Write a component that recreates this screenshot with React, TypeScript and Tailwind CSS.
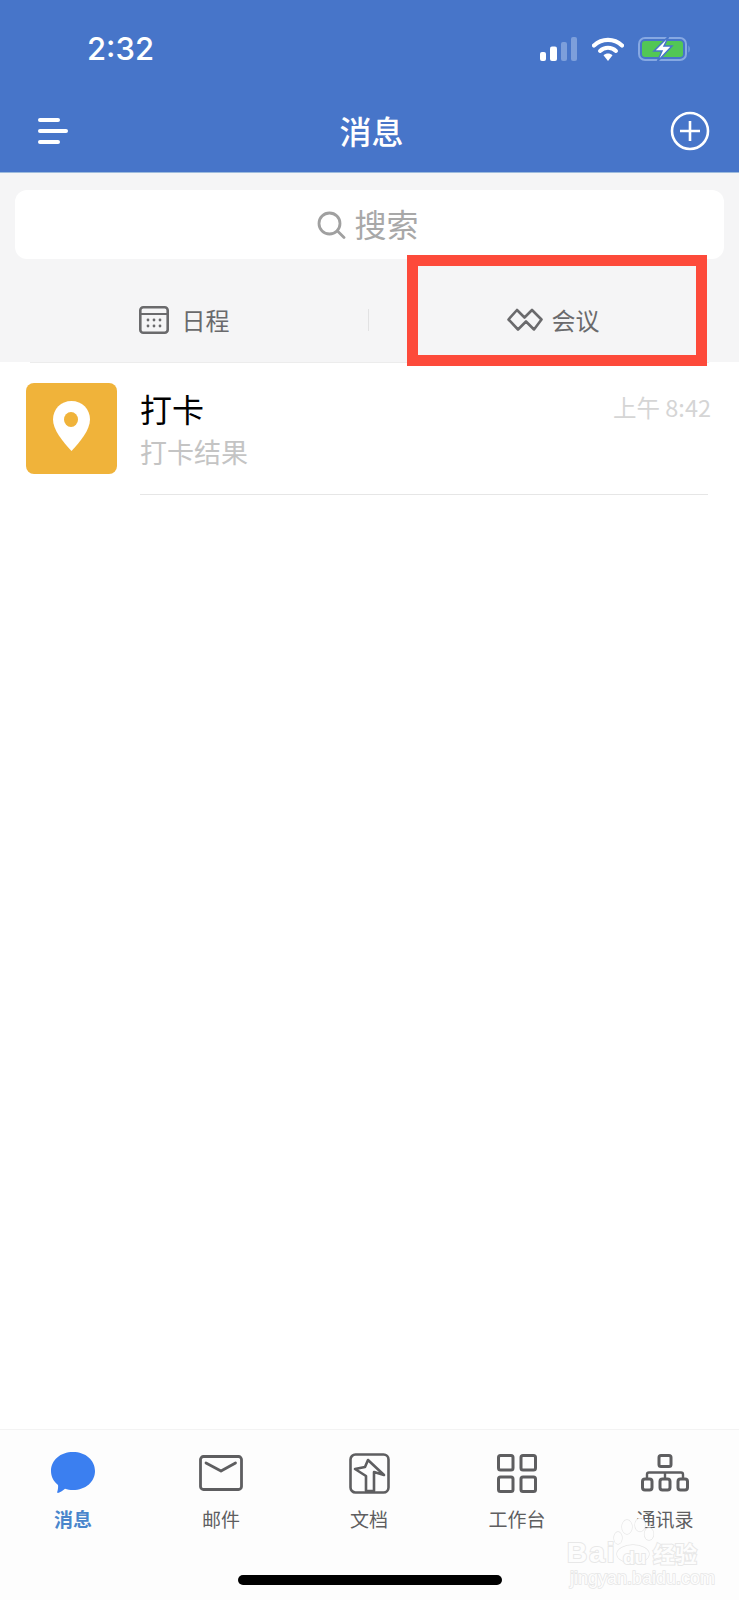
const font = "font-['Noto_Sans_CJK_SC','Noto_Sans',sans-serif]";

function TabItem({ label, active, children }: { label: string; active?: boolean; children: React.ReactNode }) {
  return (
    <div className="flex-1 flex flex-col items-center">
      <div className="h-[50px] flex items-center justify-center">{children}</div>
      <span className={`mt-[9px] text-[19px] leading-[24px] ${active ? "text-[#4a86cc] font-bold" : "text-[#5e5e60]"}`}>{label}</span>
    </div>
  );
}

export default function App() {
  return (
    <div className={`${font} relative w-[739px] h-[1600px] overflow-hidden bg-white flex flex-col`}>
      {/* blue header */}
      <header className="h-[173px] shrink-0 bg-[#4775c9] border-b border-[#9dbbdd] text-white">
        <div className="h-[102px] flex items-start pt-[31px] pl-[87px] pr-[48px]">
          <span className="font-['Inter',sans-serif] text-[31px] leading-[36px] font-medium">2:32</span>
          <div className="ml-auto flex items-center gap-[14px] h-[36px]">
            <svg width="38" height="24" viewBox="0 0 38 24">
              <rect x="0" y="15" width="6" height="9" rx="2" fill="#fff" />
              <rect x="10" y="9.500" width="7" height="14.500" rx="2" fill="#fff" />
              <rect x="21" y="5" width="6" height="19" rx="2" fill="#7d9fdb" />
              <rect x="31" y="0" width="6" height="24" rx="2" fill="#7d9fdb" />
            </svg>
            <svg width="32" height="24" viewBox="0 0 32 24" fill="none">
              <path d="M2 8.500C10 1 22 1 30 8.500" stroke="#fff" strokeWidth="4.200" strokeLinecap="round" />
              <path d="M8 14C12.500 9.800 19.500 9.800 24 14" stroke="#fff" strokeWidth="4" strokeLinecap="round" />
              <path d="M11.500 18.300C14 16 18 16 20.500 18.300L16 24Z" fill="#fff" />
            </svg>
            <svg width="53" height="26" viewBox="0 0 53 26" fill="none">
              <rect x="1" y="2" width="47" height="22" rx="6" stroke="#86a8e2" strokeWidth="2" />
              <rect x="4" y="5" width="41" height="16" rx="3" fill="#52c755" />
              <path d="M50.500 9.500C52 10.500 52 15.500 50.500 16.500Z" fill="#86a8e2" />
              <path d="M31 0L16 15H24L19 26L34 10H26Z" fill="#fff" stroke="#4775c9" strokeWidth="1.500" />
            </svg>
          </div>
        </div>
        <div className="h-[69px] flex items-center pl-[38px] pr-[29px] -mt-[6px]">
          <svg width="31" height="26" viewBox="0 0 31 26">
            <rect x="0" y="0" width="22" height="4" rx="2" fill="#fff" />
            <rect x="0" y="11" width="30" height="4" rx="2" fill="#fff" />
            <rect x="0" y="22" width="22" height="4" rx="2" fill="#fff" />
          </svg>
          <h1 className="flex-1 text-center text-[32px] leading-[40px] font-medium pl-[4px] -mt-[2px]">消息</h1>
          <svg width="40" height="40" viewBox="0 0 40 40" fill="none" stroke="#fff" strokeWidth="2.600">
            <circle cx="20" cy="20" r="18" />
            <path d="M20 10V30M10 20H30" />
          </svg>
        </div>
      </header>

      {/* search + shortcuts */}
      <section className="h-[189px] shrink-0 bg-[#f5f5f6] pt-[17px] px-[15px]">
        <div className="h-[69px] rounded-[12px] bg-white flex items-center justify-center gap-[8px] pr-[3px] text-[32px] text-[#a8a8a8]">
          <svg width="29" height="28" viewBox="0 0 29 28" fill="none" stroke="#a0a0a0" strokeWidth="2.800" strokeLinecap="round">
            <circle cx="12.500" cy="12.500" r="10.500" />
            <path d="M20.500 20L27 26.500" />
          </svg>
          <span className="leading-[40px] -mt-[3px]">搜索</span>
        </div>
        <div className="flex items-center h-[103px] pt-[19px] -mx-[15px] text-[24px] text-[#6a6a6c]">
          <div className="flex-1 flex items-center justify-center gap-[13px]">
            <svg width="30" height="28" viewBox="0 0 30 28" fill="none">
              <rect x="1.300" y="1.300" width="27.400" height="25.400" rx="3" stroke="#6a6a6c" strokeWidth="2.600" />
              <path d="M1 8H29" stroke="#6a6a6c" strokeWidth="2" />
              <g fill="#6a6a6c">
                <circle cx="9" cy="14" r="1.400" /><circle cx="15" cy="14" r="1.400" /><circle cx="21" cy="14" r="1.400" />
                <circle cx="9" cy="20" r="1.400" /><circle cx="15" cy="20" r="1.400" /><circle cx="21" cy="20" r="1.400" />
              </g>
            </svg>
            <span className="leading-[32px]">日程</span>
          </div>
          <div className="w-px h-[22px] bg-[#e2e2e3]" />
          <div className="flex-1 flex items-center justify-center gap-[9px] pr-[2px]">
            <svg width="36" height="24" viewBox="0 0 36 24" fill="none" stroke="#6a6a6c" strokeWidth="2.600" strokeLinejoin="round">
              <path d="M1.500 11.500L10 2L17.500 9.500L25 2L34.500 11.500L27 21.500L19 13.500L11 21.500Z" />
            </svg>
            <span className="leading-[32px]">会议</span>
          </div>
        </div>
      </section>

      {/* list */}
      <main className="flex-1 bg-white">
        <div className="h-px mx-[30px] bg-[#ececec]" />
        <div className="flex pl-[26px] pr-[31px] pt-[20px]">
          <div className="w-[91px] h-[91px] shrink-0 rounded-[8px] bg-[#f0b33a] flex items-center justify-center">
            <svg className="-mt-[5px]" width="37" height="50" viewBox="0 0 37 50">
              <path d="M18.500 0C8 0 0 8 0 18.500C0 29 10 41 18.500 50C27 41 37 29 37 18.500C37 8 29 0 18.500 0Z" fill="#fff" />
              <ellipse cx="18" cy="18.500" rx="7" ry="7.500" fill="#f0b33a" />
            </svg>
          </div>
          <div className="flex-1 ml-[23px] h-[112px] border-b border-[#e6e6e6]">
            <div className="flex items-start justify-between">
              <span className="text-[32px] leading-[40px] text-black mt-[5px]">打卡</span>
              <span className="text-[23.500px] leading-[30px] text-[#d5d5d5] mt-[9px] -mr-[3px] whitespace-nowrap">上午 8:42</span>
            </div>
            <div className="text-[27px] leading-[34px] text-[#c4c4c4] mt-[7px]">打卡结果</div>
          </div>
        </div>
      </main>

      {/* bottom tabs */}
      <footer className="h-[171px] shrink-0 bg-[#fdfdfd] border-t border-[#f3f3f3] pt-[18px]">
        <div className="flex w-[740px] -ml-[1px]">
          <TabItem label="消息" active>
            <svg width="46" height="42" viewBox="0 0 46 42">
              <path d="M23 0C35.500 0 45 8 45 19C45 30 35.500 38 23 38C20 38 17.500 37.600 15 36.800C13 38.500 10.500 40.500 8 41C7 41 7 40 7.500 39C8 37 8.300 35 8 33C3.500 29.500 1 24.500 1 19C1 8 10.500 0 23 0Z" fill="#3b7ff0" />
            </svg>
          </TabItem>
          <TabItem label="邮件">
            <svg width="44" height="36" viewBox="0 0 44 36" fill="none" stroke="#5e5e60" strokeWidth="2.800" strokeLinecap="round" strokeLinejoin="round">
              <rect x="1.500" y="1.500" width="41" height="33" rx="3" />
              <path d="M7 8L22 16L36.500 8" />
            </svg>
          </TabItem>
          <TabItem label="文档">
            <svg width="41" height="41" viewBox="0 0 41 41" fill="none" stroke="#5e5e60" strokeWidth="2.600" strokeLinejoin="round">
              <rect x="1.500" y="1.500" width="38" height="38" rx="5" />
              <path d="M19 7L35 22L25 19V38H17V23L6 16L16 14Z" />
            </svg>
          </TabItem>
          <TabItem label="工作台">
            <svg width="40" height="39" viewBox="0 0 40 39" fill="none" stroke="#5e5e60" strokeWidth="3">
              <rect x="1.500" y="1.500" width="14.500" height="14.500" rx="2" />
              <rect x="24" y="1.500" width="14.500" height="14.500" rx="2" />
              <rect x="1.500" y="23" width="14.500" height="14.500" rx="2" />
              <rect x="24" y="23" width="14.500" height="14.500" rx="2" />
            </svg>
          </TabItem>
          <TabItem label="通讯录">
            <svg width="48" height="38" viewBox="0 0 48 38" fill="none" stroke="#5e5e60" strokeWidth="3">
              <rect x="18" y="1.500" width="12" height="11" rx="2" />
              <rect x="1.500" y="25" width="9.500" height="11" rx="2.500" />
              <rect x="19" y="25" width="10" height="11" rx="2.500" />
              <rect x="37" y="25" width="9.500" height="11" rx="2.500" />
              <path d="M6 25V20.500Q6 18.500 8 18.500H40Q42 18.500 42 20.500V25M24 18.500V25" strokeWidth="2.400" />
            </svg>
          </TabItem>
        </div>
      </footer>

      {/* home indicator */}
      <div className="absolute left-[238px] top-[1575px] w-[264px] h-[10px] rounded-full bg-black" />

      {/* red annotation */}
      <div className="absolute left-[407px] top-[255px] w-[300px] h-[111px] border-[11px] border-[#fd4a3a]" />

      {/* watermark */}
      <div className="absolute left-[566px] top-[1518px] w-[136px] h-[70px] font-['Liberation_Sans',sans-serif] text-[#fdfdfd] [paint-order:stroke_fill] [-webkit-text-stroke:2px_#e8e8e8]">
        <svg className="absolute left-[46px] top-0" width="46" height="46" viewBox="0 0 46 46" fill="#fdfdfd" stroke="#e6e6e6" strokeWidth="1.300">
          <ellipse cx="6" cy="20" rx="4" ry="6" />
          <ellipse cx="15" cy="9" rx="5" ry="7" />
          <ellipse cx="28" cy="7" rx="5" ry="6.500" />
          <ellipse cx="37" cy="16" rx="4.500" ry="6" />
          <ellipse cx="21" cy="36" rx="16" ry="9" />
        </svg>
        <span className="absolute left-[1px] top-[19px] text-[28px] leading-[32px] font-bold tracking-[2px] whitespace-nowrap">Bai</span>
        <span className="absolute left-[57px] top-[28px] text-[19px] leading-[24px] font-bold whitespace-nowrap">du</span>
        <span className="absolute left-[87px] top-[18px] text-[22px] leading-[32px] font-['Noto_Sans_CJK_SC',sans-serif] font-bold whitespace-nowrap">经验</span>
        <span className="absolute left-[4px] top-[49px] text-[18px] leading-[22px] whitespace-nowrap [-webkit-text-stroke:1.500px_#e6e6e6]">jingyan.baidu.com</span>
      </div>
    </div>
  );
}
